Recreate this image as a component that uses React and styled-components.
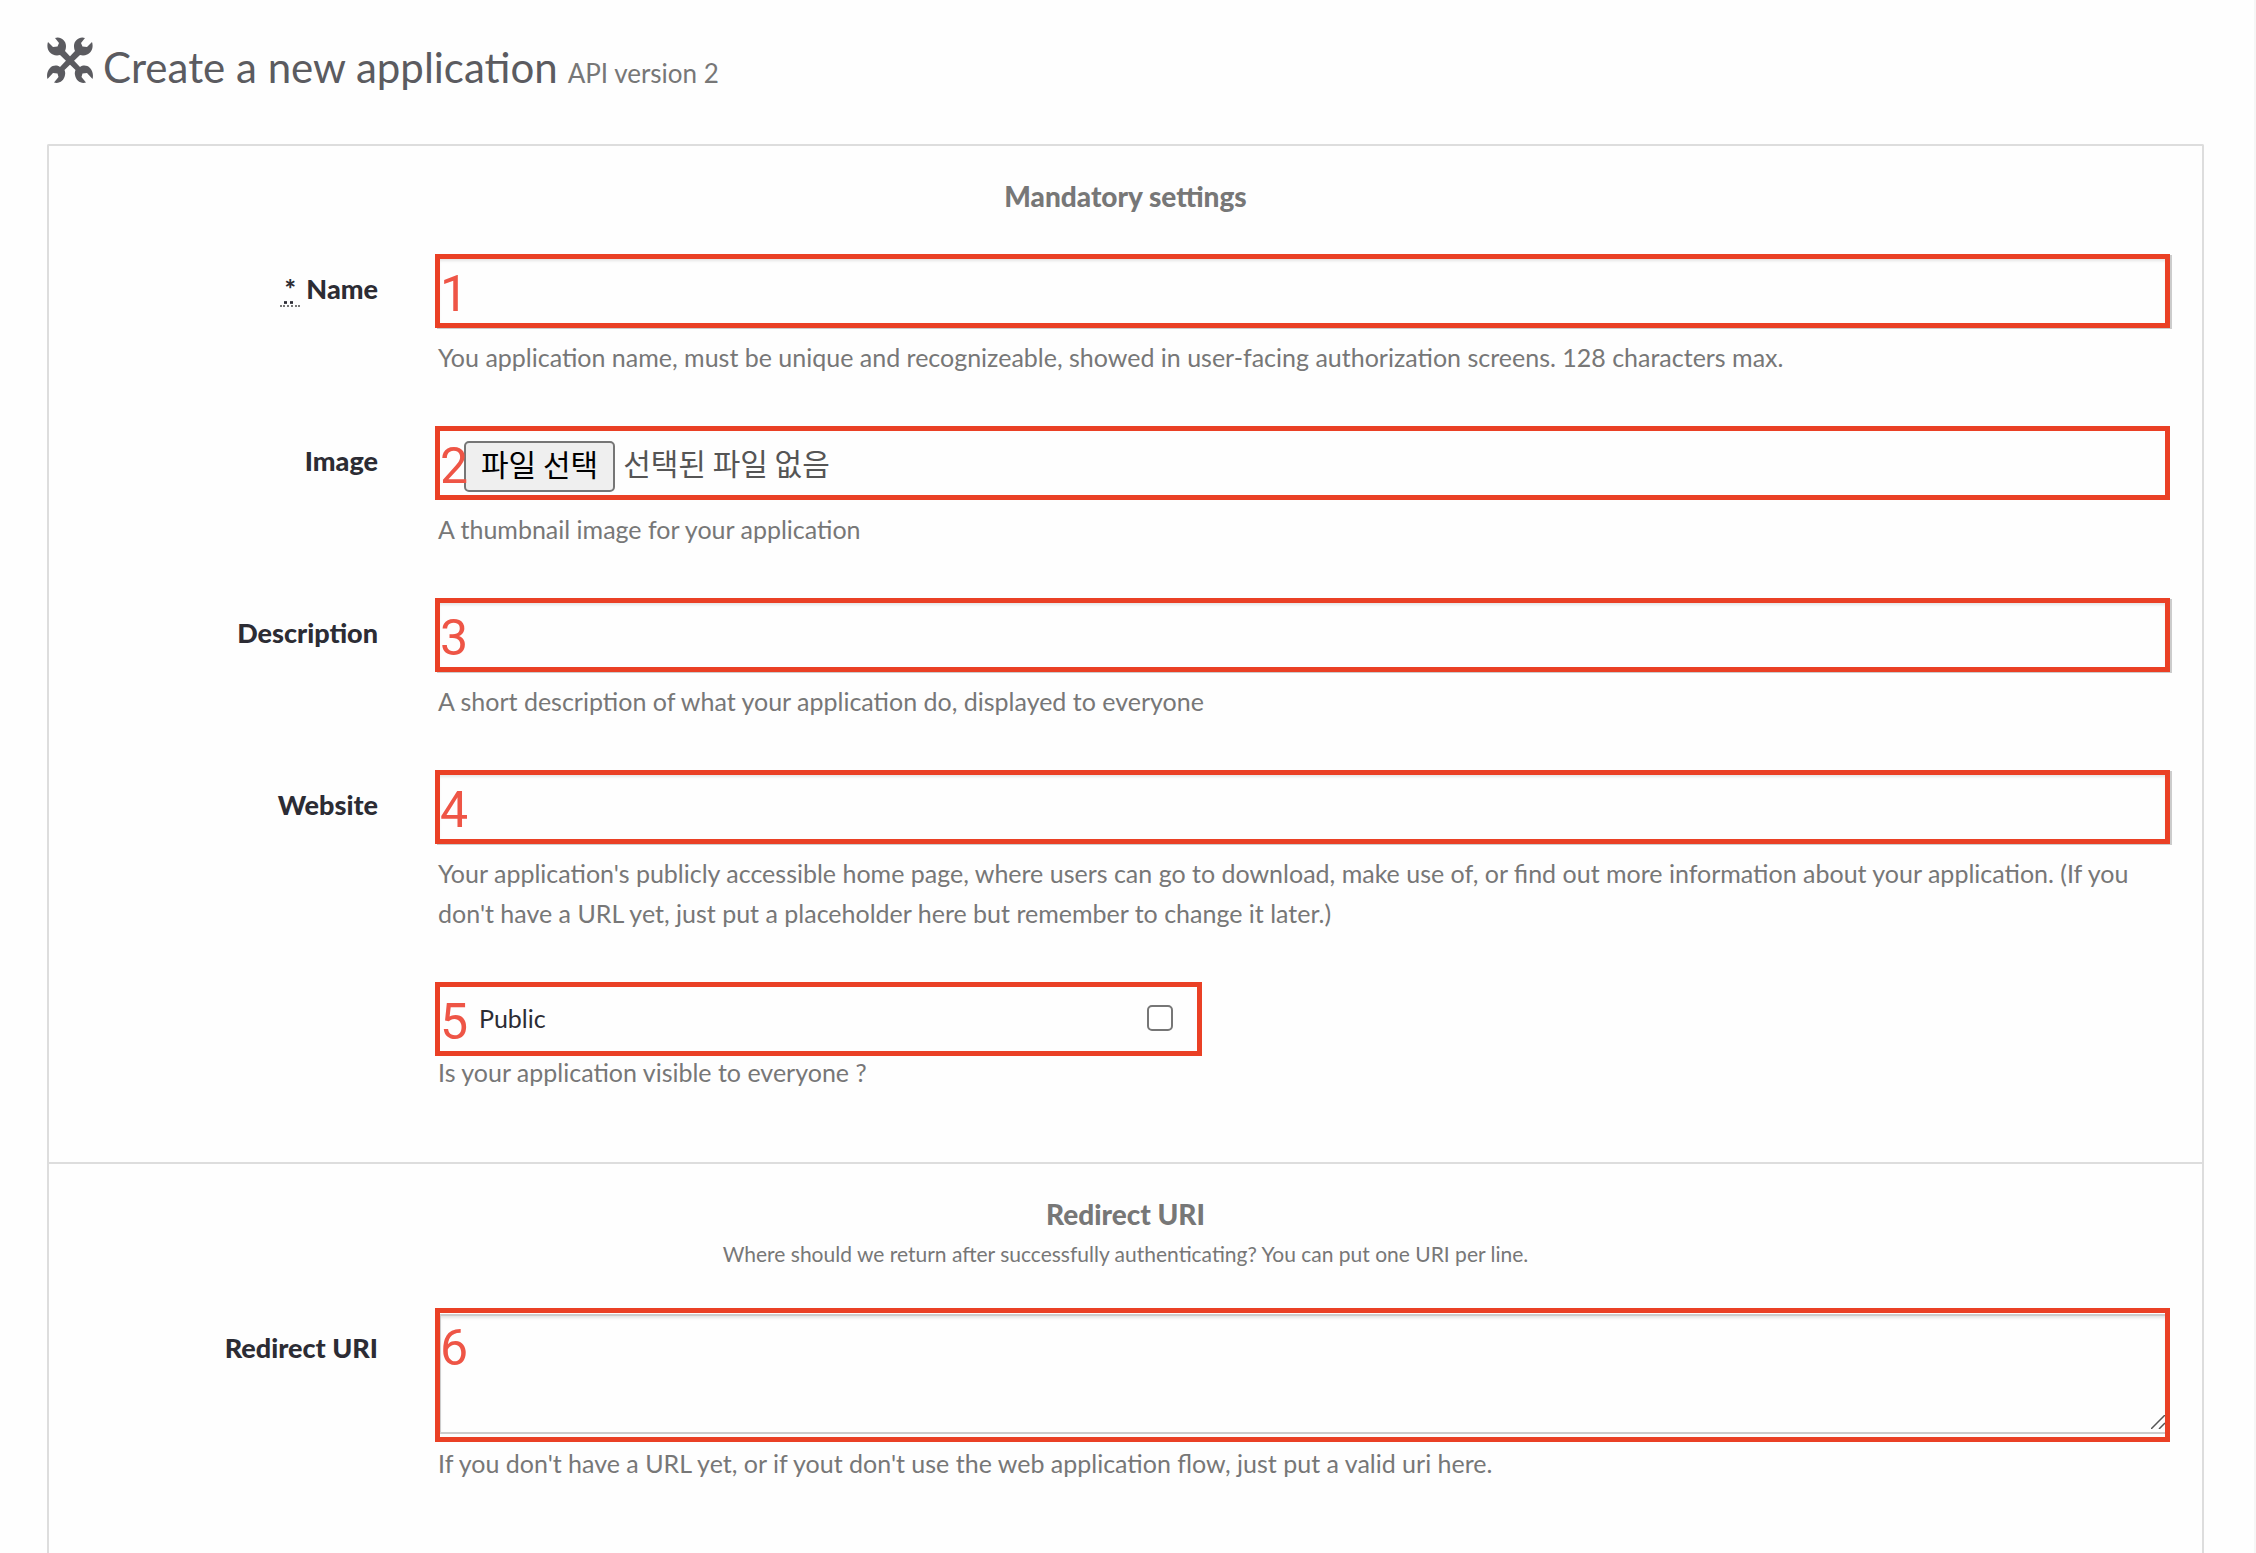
import React, { useRef } from "react";
import styled, { createGlobalStyle, css } from "styled-components";

const GlobalStyle = createGlobalStyle`
  *, *::before, *::after { box-sizing: border-box; }
  body {
    margin: 0;
    background: #fefefe;
    color: #2c2c34;
    font-family: Lato, "Noto Sans CJK KR", sans-serif;
    font-size: 25px;
    line-height: 40px;
  }
`;

const Page = styled.main`
  display: flex;
  flex-direction: column;
  min-height: 100vh;
  padding: 36px 50px 0 47px;
  border-right: 2px solid #f6f6f6;
`;

const Title = styled.h1`
  display: flex;
  align-items: baseline;
  gap: 10px;
  height: 108px;
  margin: 0;
  color: #5b5b60;
  font-size: 42px;
  font-weight: 400;
  line-height: 62px;
`;

const TitleIcon = styled.svg`
  width: 46px;
  height: 46px;
  fill: currentColor;
`;

const Version = styled.small`
  color: #777;
  font-size: 26px;
`;

const Panel = styled.form`
  flex: 1;
  border: 2px solid #ddd;
  border-bottom: 0;
  border-radius: 2px 2px 0 0;
`;

const Section = styled.fieldset`
  min-width: 0;
  margin: 0;
  padding: 30px 32px 70px 0;
  border: 0;

  & + & { border-top: 2px solid #ddd; }
`;

const SectionHead = styled.header`
  margin: 0 -32px ${(p) => p.$gap}px 0;
  color: #777;
  text-align: center;
`;

const Heading = styled.h2`
  margin: 0;
  font-size: 28px;
  font-weight: 900;
`;

const Lead = styled.p`
  margin: 0;
  font-size: 21px;
`;

const Rows = styled.div`
  display: grid;
  gap: 49px;
`;

const Row = styled.div`
  display: grid;
  grid-template-columns: 329px minmax(0, 1fr);
  column-gap: 57px;
`;

const Label = styled.label`
  grid-column: 1;
  padding-top: ${(p) => (p.$tall ? 20 : 15)}px;
  font-size: 27px;
  font-weight: 900;
  text-align: right;
`;

const Required = styled.abbr`
  padding: 0 4px;
  border-bottom: 2px dotted #777;
  text-decoration: underline dotted;
`;

const Field = styled.div`
  grid-column: 2;
`;

const Frame = styled.div`
  position: relative;
  display: flex;
  align-items: center;
  height: ${(p) => (p.$tall ? 134 : 74)}px;
  max-width: ${(p) => (p.$narrow ? "767px" : "none")};
  border: 5px solid #ea4025;
  ${(p) => p.$raised && css`box-shadow: 2px 1px 0 #ccc;`}
`;

const Badge = styled.span`
  position: absolute;
  top: 7px;
  left: 0;
  z-index: 1;
  color: #ee5546;
  font-family: Roboto, "Liberation Sans", sans-serif;
  font-size: 50px;
  line-height: 56px;
  pointer-events: none;
`;

const controlText = css`
  width: 100%;
  height: 100%;
  color: #555;
  font: inherit;
  background: transparent;
  outline: 0;
`;

const TextInput = styled.input`
  ${controlText}
  padding: 0 12px 0 36px;
  border: 0;
  box-shadow: inset 0 3px 3px -1px rgba(0, 0, 0, 0.1);
`;

const TextArea = styled.textarea`
  ${controlText}
  display: block;
  height: 120px;
  margin-bottom: 2px;
  padding: 8px 12px 8px 36px;
  border: solid #ccc;
  border-width: 2px 0 2px 1px;
  box-shadow: inset 0 3px 3px -1px rgba(0, 0, 0, 0.1);
  resize: vertical;

  &::-webkit-resizer { background: transparent; }
`;

const Grip = styled.svg`
  position: absolute;
  right: 0;
  bottom: 8px;
  width: 14px;
  height: 14px;
  fill: none;
  stroke: #555;
  stroke-width: 1.5;
  pointer-events: none;
`;

const FilePicker = styled.div`
  display: flex;
  align-items: center;
  gap: 8px;
  padding: 6px 0 0 24px;
  color: #555;
  font-family: "Noto Sans CJK KR", sans-serif;
  font-size: 30px;
`;

const FileButton = styled.button`
  height: 51px;
  padding: 0 15px 8px;
  border: 2px solid #767676;
  border-radius: 5px;
  background: #efefef;
  color: #000;
  font: inherit;
`;

const FileStatus = styled.span`
  padding-bottom: 8px;
`;

const CheckLabel = styled.label`
  display: flex;
  flex: 1;
  align-items: center;
  justify-content: space-between;
  padding: 0 24px 2px 39px;
`;

const Checkbox = styled.input`
  appearance: none;
  width: 26px;
  height: 26px;
  margin: 0;
  border: 2px solid #767676;
  border-radius: 5px;
  background: #fff;

  &:checked { background: #767676; }
`;

const Help = styled.p`
  margin: ${(p) => p.$gap}px 0 0;
  padding: 0 20px 0 3px;
  color: #777;
`;

function Tools() {
  const wrench =
    "M8 1C13 -1 19 3 19 9C19 11 18.500 13 18 14L33 30C36 28 40 28 43 31C46 34 46.500 39 45.500 42L40 36L35.500 36.500L34.500 40L39 45.500C34 47 29 44 28 38C27.500 36 28 34.500 28.500 33L13 18C9 19 5 18 2.500 15C0 12 0 8 1 5L6 10L10.500 9.500L12 6Z";
  return (
    <TitleIcon viewBox="0 0 46 46" aria-hidden="true">
      <path d={wrench} />
      <path d={wrench} transform="translate(46 0) scale(-1 1)" />
    </TitleIcon>
  );
}

function FormRow({ id, label, number, help, helpGap = 9, required, children, ...frame }) {
  return (
    <Row>
      {label && (
        <Label htmlFor={id} $tall={frame.$tall}>
          {required && <Required title="required">*</Required>}
          {required && " "}
          {label}
        </Label>
      )}
      <Field>
        <Frame {...frame}>
          <Badge>{number}</Badge>
          {children}
        </Frame>
        <Help id={`${id}-help`} $gap={helpGap}>{help}</Help>
      </Field>
    </Row>
  );
}

function ImagePicker() {
  const input = useRef(null);
  return (
    <FilePicker>
      <input ref={input} type="file" accept="image/*" hidden />
      <FileButton id="image" type="button" onClick={() => input.current.click()}>
        파일 선택
      </FileButton>
      <FileStatus>선택된 파일 없음</FileStatus>
    </FilePicker>
  );
}

export default function App() {
  return (
    <>
      <GlobalStyle />
      <Page>
        <Title>
          <Tools />
          Create a new application
          <Version>API version 2</Version>
        </Title>
        <Panel>
          <Section>
            <SectionHead $gap={38}>
              <Heading>Mandatory settings</Heading>
            </SectionHead>
            <Rows>
              <FormRow
                id="name" label="Name" number="1" required $raised
                help="You application name, must be unique and recognizeable, showed in user-facing authorization screens. 128 characters max."
              >
                <TextInput id="name" type="text" maxLength={128} />
              </FormRow>
              <FormRow id="image" label="Image" number="2" help="A thumbnail image for your application">
                <ImagePicker />
              </FormRow>
              <FormRow
                id="description" label="Description" number="3" $raised
                help="A short description of what your application do, displayed to everyone"
              >
                <TextInput id="description" type="text" />
              </FormRow>
              <FormRow
                id="website" label="Website" number="4" $raised
                help="Your application's publicly accessible home page, where users can go to download, make use of, or find out more information about your application. (If you don't have a URL yet, just put a placeholder here but remember to change it later.)"
              >
                <TextInput id="website" type="url" />
              </FormRow>
              <FormRow id="public" number="5" $narrow helpGap={-4} help="Is your application visible to everyone ?">
                <CheckLabel>
                  Public
                  <Checkbox id="public" type="checkbox" />
                </CheckLabel>
              </FormRow>
            </Rows>
          </Section>
          <Section>
            <SectionHead $gap={34}>
              <Heading>Redirect URI</Heading>
              <Lead>Where should we return after successfully authenticating? You can put one URI per line.</Lead>
            </SectionHead>
            <Rows>
              <FormRow
                id="redirect" label="Redirect URI" number="6" $tall helpGap={1}
                help="If you don't have a URL yet, or if yout don't use the web application flow, just put a valid uri here."
              >
                <TextArea id="redirect" />
                <Grip viewBox="0 0 14 14" aria-hidden="true">
                  <path d="M0 14L14 0M8 14L14 8" />
                </Grip>
              </FormRow>
            </Rows>
          </Section>
        </Panel>
      </Page>
    </>
  );
}
